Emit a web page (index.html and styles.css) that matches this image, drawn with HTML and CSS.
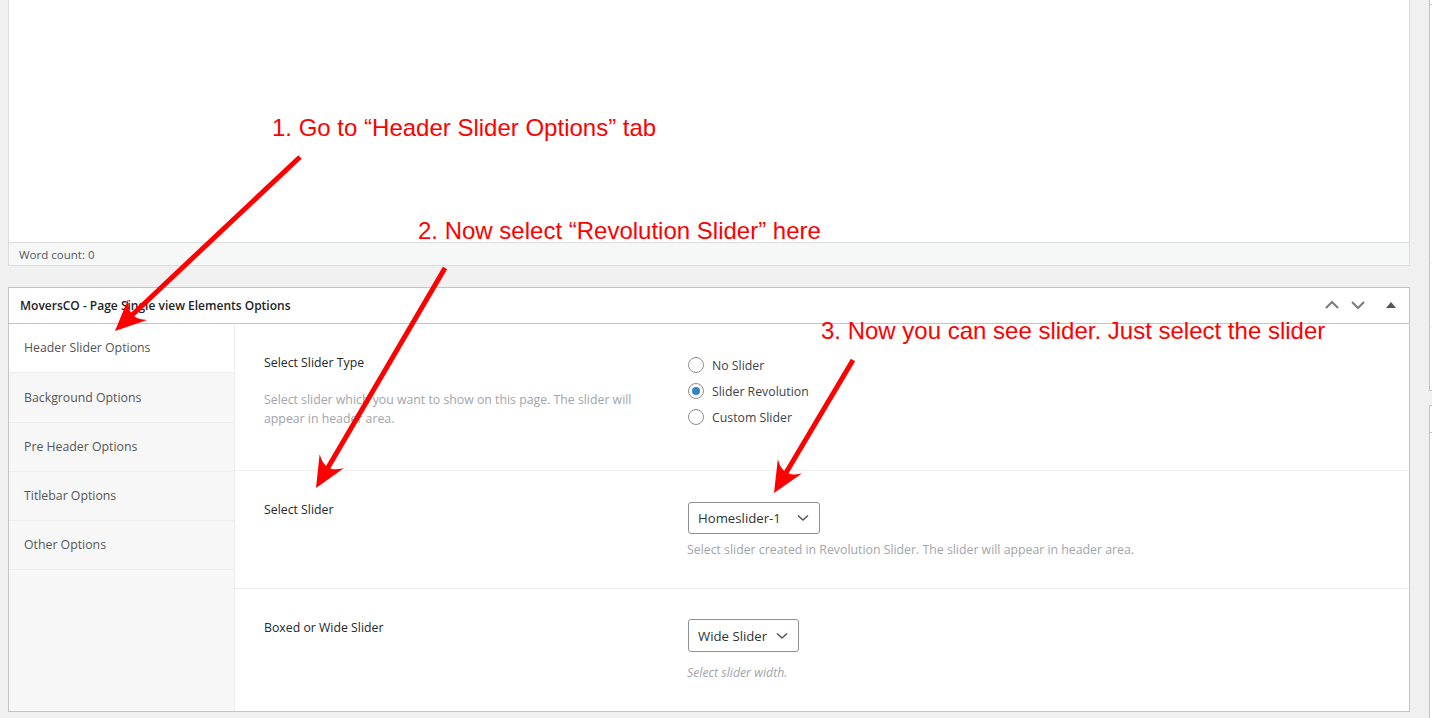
FILE: index.html
```html
<!DOCTYPE html>
<html lang="en">
<head>
    <meta charset="UTF-8">
    <title>Edit Page</title>
    <link rel="stylesheet" href="styles.css">
</head>
<body>
    <div class="page">
        <div class="main">
            <!-- Editor -->
            <div class="editor">
                <div class="editor-area"></div>
                <div class="status">Word count: 0</div>
            </div>

            <!-- Metabox -->
            <div class="metabox">
                <div class="metabox-head">
                    <h2>MoversCO - Page Single view Elements Options</h2>
                    <div class="head-actions">
                        <svg width="16" height="10" viewBox="0 0 16 10"><path d="M2 8 L8 2 L14 8" fill="none" stroke="#787c82" stroke-width="2"/></svg>
                        <svg width="16" height="10" viewBox="0 0 16 10"><path d="M2 2 L8 8 L14 2" fill="none" stroke="#787c82" stroke-width="2"/></svg>
                        <svg class="toggle" width="10" height="6" viewBox="0 0 10 6"><path d="M0 6 L5 0 L10 6 Z" fill="#50575e"/></svg>
                    </div>
                </div>
                <div class="metabox-body">
                    <ul class="tabs">
                        <li class="active">Header Slider Options</li>
                        <li>Background Options</li>
                        <li>Pre Header Options</li>
                        <li>Titlebar Options</li>
                        <li>Other Options</li>
                    </ul>
                    <div class="fields">
                        <div class="field field-type">
                            <div class="field-label">
                                <div class="label">Select Slider Type</div>
                                <p class="desc">Select slider which you want to show on this page. The slider will appear in header area.</p>
                            </div>
                            <div class="field-control">
                                <label class="radio"><span class="circle"></span>No Slider</label>
                                <label class="radio"><span class="circle checked"></span>Slider Revolution</label>
                                <label class="radio"><span class="circle"></span>Custom Slider</label>
                            </div>
                        </div>
                        <div class="field field-slider">
                            <div class="field-label">
                                <div class="label">Select Slider</div>
                            </div>
                            <div class="field-control">
                                <div class="select select-home">Homeslider-1
                                    <svg width="12" height="8" viewBox="0 0 12 8"><path d="M1 1.5 L6 6 L11 1.5" fill="none" stroke="#50575e" stroke-width="1.6"/></svg>
                                </div>
                                <p class="help">Select slider created in Revolution Slider. The slider will appear in header area.</p>
                            </div>
                        </div>
                        <div class="field field-last">
                            <div class="field-label">
                                <div class="label">Boxed or Wide Slider</div>
                            </div>
                            <div class="field-control">
                                <div class="select select-wide">Wide Slider
                                    <svg width="12" height="8" viewBox="0 0 12 8"><path d="M1 1.5 L6 6 L11 1.5" fill="none" stroke="#50575e" stroke-width="1.6"/></svg>
                                </div>
                                <p class="help help-italic">Select slider width.</p>
                            </div>
                        </div>
                    </div>
                </div>
            </div>
        </div>

        <div class="side">
            <div class="side-box side-box-1">
                <div class="side-line line-a"></div>
                <div class="side-line line-b"></div>
                <div class="side-line line-c"></div>
            </div>
            <div class="side-box side-box-2">
                <div class="side-line line-d"></div>
            </div>
        </div>
    </div>

    <!-- Annotations -->
    <div class="notes">
        <div class="note note1">1. Go to “Header Slider Options” tab</div>
        <div class="note note2">2. Now select “Revolution Slider” here</div>
        <div class="note note3">3. Now you can see slider. Just select the slider</div>
        <svg class="arrows" width="1432" height="718" viewBox="0 0 1432 718">
            <defs>
                <marker id="head" markerUnits="userSpaceOnUse" markerWidth="32" markerHeight="30" viewBox="0 0 32 30" refX="14" refY="15" orient="auto">
                    <path d="M32 15 L1 1 Q10 11 7 15 Q10 19 1 29 Z" fill="#ff0000"/>
                </marker>
            </defs>
            <line x1="300" y1="157" x2="128.1" y2="318.7" stroke="#ff0000" stroke-width="5" marker-end="url(#head)"/>
            <line x1="445" y1="268" x2="325.1" y2="472.5" stroke="#ff0000" stroke-width="5" marker-end="url(#head)"/>
            <line x1="853" y1="360" x2="783.2" y2="477.5" stroke="#ff0000" stroke-width="5" marker-end="url(#head)"/>
        </svg>
    </div>
</body>
</html>
```

FILE: styles.css
```css
* {
    margin: 0;
    padding: 0;
    box-sizing: border-box;
}

body {
    font-family: 'Open Sans', 'Noto Sans', sans-serif;
    font-size: 12.3px;
    color: #3c434a;
    background: #f0f0f1;
    width: 1432px;
    height: 718px;
    overflow: hidden;
    position: relative;
}

.page {
    display: flex;
    gap: 19px;
    padding-left: 8px;
}

.main {
    flex: 0 0 1402px;
}

/* Editor */
.editor {
    background: #fff;
    border: 1px solid #dcdcde;
    border-top: none;
}

.editor-area {
    height: 242px;
}

.status {
    height: 23px;
    line-height: 23px;
    border-top: 1px solid #dcdcde;
    background: #f6f7f7;
    padding-left: 10px;
    font-size: 11.5px;
    color: #50575e;
}

/* Metabox */
.metabox {
    margin-top: 21px;
    background: #fff;
    border: 1px solid #c3c4c7;
}

.metabox-head {
    height: 36px;
    border-bottom: 1px solid #c3c4c7;
    display: flex;
    align-items: center;
    justify-content: space-between;
    padding: 0 12px 1px 11px;
}

.metabox-head h2 {
    font-size: 12px;
    font-weight: 600;
    color: #1d2327;
}

.head-actions {
    display: flex;
    align-items: center;
    gap: 10px;
}

.head-actions .toggle {
    margin-left: 10px;
    margin-right: 1px;
}

.metabox-body {
    display: flex;
}

.tabs {
    list-style: none;
    flex: 0 0 226px;
    background: #f7f7f7;
    border-right: 1px solid #eee;
}

.tabs li {
    height: 49px;
    line-height: 48px;
    padding-left: 15px;
    border-bottom: 1px solid #eee;
    color: #555;
}

.tabs li:nth-child(2) {
    height: 50px;
    line-height: 49px;
}

.tabs li.active {
    background: #fff;
}

.fields {
    flex: 1;
}

.field {
    display: grid;
    grid-template-columns: 423px 1fr;
    padding: 29px 29px 28px 29px;
    border-bottom: 1px solid #eee;
}

.field-type {
    padding-bottom: 40px;
}

.field-type .field-control {
    margin-top: -1px;
}

.field-last {
    border-bottom: none;
}

.label {
    line-height: 20px;
    color: #23282d;
}

.desc {
    margin-top: 17px;
    width: 390px;
    line-height: 19px;
    color: #a0a5aa;
}

.radio {
    display: flex;
    align-items: center;
    height: 26px;
    color: #3c434a;
}

.circle {
    width: 16px;
    height: 16px;
    border: 1px solid #8c8f94;
    border-radius: 50%;
    margin: 0 8px 0 1px;
    display: flex;
    align-items: center;
    justify-content: center;
}

.circle.checked::after {
    content: '';
    width: 8px;
    height: 8px;
    border-radius: 50%;
    background: #3582c4;
}

.select {
    margin-top: 2px;
    height: 32px;
    border: 1px solid #8c8f94;
    border-radius: 3px;
    display: inline-flex;
    align-items: center;
    justify-content: space-between;
    padding: 0 10px 0 9px;
    font-size: 13.2px;
    color: #2c3338;
    margin-left: 1px;
}

.select-home {
    width: 132px;
}

.select-wide {
    width: 111px;
    height: 33px;
    margin-top: 1px;
}

.select svg {
    flex: none;
}

.help {
    margin-top: 6px;
    line-height: 20px;
    color: #a0a5aa;
}

.help-italic {
    margin-top: 11px;
    font-style: italic;
}

/* Sidebar edge */
.side {
    flex: 0 0 280px;
}

.side-box {
    background: #fff;
    border: 1px solid #c3c4c7;
    position: relative;
}

.side-box-1 {
    height: 391px;
    border-top: none;
}

.side-box-2 {
    margin-top: 14px;
    height: 400px;
}

.side-line {
    position: absolute;
    left: 0;
    right: 0;
    height: 1px;
}

.line-a { top: 4px; background: #c3c4c7; }
.line-b { top: 263px; background: #f0f0f1; }
.line-c { top: 327px; background: #f0f0f1; }
.line-d { top: 26px; background: #c3c4c7; }

/* Annotations */
.notes {
    position: absolute;
    left: 0;
    top: 0;
    width: 1432px;
    height: 718px;
    pointer-events: none;
}

.note {
    position: absolute;
    font-family: 'Liberation Sans', Arial, sans-serif;
    font-size: 24px;
    line-height: 24px;
    color: #ff0000;
    white-space: nowrap;
}

.note1 { left: 272px; top: 116px; }
.note2 { left: 418px; top: 219px; }
.note3 { left: 821px; top: 319px; }

.arrows {
    position: absolute;
    left: 0;
    top: 0;
}
```
